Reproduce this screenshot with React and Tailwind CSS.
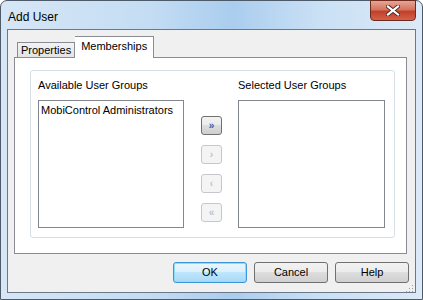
import React from 'react';

const font = { fontFamily: '"Liberation Sans", Arial, sans-serif' };

function ArrowButton({ glyph, enabled }) {
  return (
    <div
      className={`w-[21px] h-[19px] rounded-[3px] border flex items-center justify-center text-[10px] leading-none font-bold ${
        enabled
          ? 'border-[#707070] bg-[linear-gradient(#f2f2f2,#ebebeb_50%,#dddddd_50%,#cfcfcf)] text-[#3461a8]'
          : 'border-[#c4c8cc] bg-[#f4f4f4] text-[#b6c4d8]'
      }`}
    >
      {glyph}
    </div>
  );
}

function DialogButton({ label, focused }) {
  return (
    <div
      className={`w-[74px] h-[21px] rounded-[3px] border flex items-center justify-center text-[11px] text-black ${
        focused
          ? 'border-[#3c96d8] shadow-[inset_0_0_0_1px_#8fdcf8] bg-[linear-gradient(#eaf6fd,#d9f0fc_50%,#bee6fd_50%,#a7d9f5)]'
          : 'border-[#707070] bg-[linear-gradient(#f2f2f2,#ebebeb_50%,#dddddd_50%,#cfcfcf)]'
      }`}
    >
      {label}
    </div>
  );
}

export default function App() {
  return (
    <div style={font} className="w-[423px] h-[300px] overflow-hidden">
      <div className="w-full h-full flex flex-col rounded-t-[7px] border border-[#4d5a69] bg-[linear-gradient(90deg,#d6e6f6,#c4ddf3_35%,#aacdee_55%,#c9e0f5_75%,#dce9f7)]">
        {/* Title bar */}
        <div className="h-[28px] flex items-start justify-between">
          <div className="pl-[7px] pt-[7px] text-[12px] text-black">Add User</div>
          <div className="mr-[6px] -mt-px w-[46px] h-[21px] rounded-b-[4px] border border-[#6d2a1f] bg-[linear-gradient(#e7a593,#d47561_45%,#c2402a_55%,#d2614a)] flex items-center justify-center">
            <svg width="14" height="11" viewBox="0 0 14 11">
              <path d="M2 1.5 L12 9.5 M12 1.5 L2 9.5" stroke="#4a2a24" strokeWidth="4" strokeLinecap="square" />
              <path d="M2 1.5 L12 9.5 M12 1.5 L2 9.5" stroke="#ffffff" strokeWidth="2.2" strokeLinecap="square" />
            </svg>
          </div>
        </div>

        {/* Client area */}
        <div className="mx-[6px] h-[264px] border border-[#6b7888] bg-[#f0f0f0] flex flex-col">
          <div className="pt-[6px] pl-[6px] pr-[8px]">
            {/* Tabs */}
            <div className="h-[21px] flex items-end pl-[3px]">
              <div className="h-[15px] px-[3px] border border-b-0 border-[#898c95] bg-[linear-gradient(#f3f3f3,#e3e3e3)] text-[11px] leading-[14px] text-black">
                Properties
              </div>
              <div className="relative -mb-px h-[22px] px-[6px] border border-b-0 border-l-0 border-[#898c95] bg-white text-[11px] leading-[18px] text-black z-10">
                Memberships
              </div>
            </div>
            {/* Tab page */}
            <div className="h-[197px] border border-[#898c95] bg-white pt-[12px] pl-[15px] pr-[11px]">
              <div className="h-[168px] rounded-[3px] border border-[#d5dfe5] flex pl-[7px] pr-[8px]">
                <div className="flex flex-col">
                  <div className="h-[29px] pt-[8px] text-[11px] leading-[13px] text-black">Available User Groups</div>
                  <div className="w-[146px] h-[128px] border border-[#828790] bg-white px-[2px] pt-[3px] text-[11px] leading-[13px] text-black">
                    MobiControl Administrators
                  </div>
                </div>
                <div className="flex flex-col gap-[10px] pt-[45px] pl-[17px] pr-[16px]">
                  <ArrowButton glyph="»" enabled />
                  <ArrowButton glyph="›" />
                  <ArrowButton glyph="‹" />
                  <ArrowButton glyph="«" />
                </div>
                <div className="flex flex-col">
                  <div className="h-[29px] pt-[8px] text-[11px] leading-[13px] text-black">Selected User Groups</div>
                  <div className="w-[147px] h-[128px] border border-[#828790] bg-white" />
                </div>
              </div>
            </div>
          </div>
          {/* Buttons */}
          <div className="flex justify-end gap-[7px] pt-[8px] pr-[6px]">
            <DialogButton label="OK" focused />
            <DialogButton label="Cancel" />
            <DialogButton label="Help" />
          </div>
          <div className="flex justify-end pr-[1px] pt-[1px]">
            <svg width="9" height="9" viewBox="0 0 9 9">
              <rect x="7" y="1" width="1" height="1" fill="#a0a0a0" />
              <rect x="4" y="4" width="1" height="1" fill="#a0a0a0" />
              <rect x="7" y="4" width="1" height="1" fill="#a0a0a0" />
              <rect x="1" y="7" width="1" height="1" fill="#a0a0a0" />
              <rect x="4" y="7" width="1" height="1" fill="#a0a0a0" />
              <rect x="7" y="7" width="1" height="1" fill="#a0a0a0" />
            </svg>
          </div>
        </div>
      </div>
    </div>
  );
}
